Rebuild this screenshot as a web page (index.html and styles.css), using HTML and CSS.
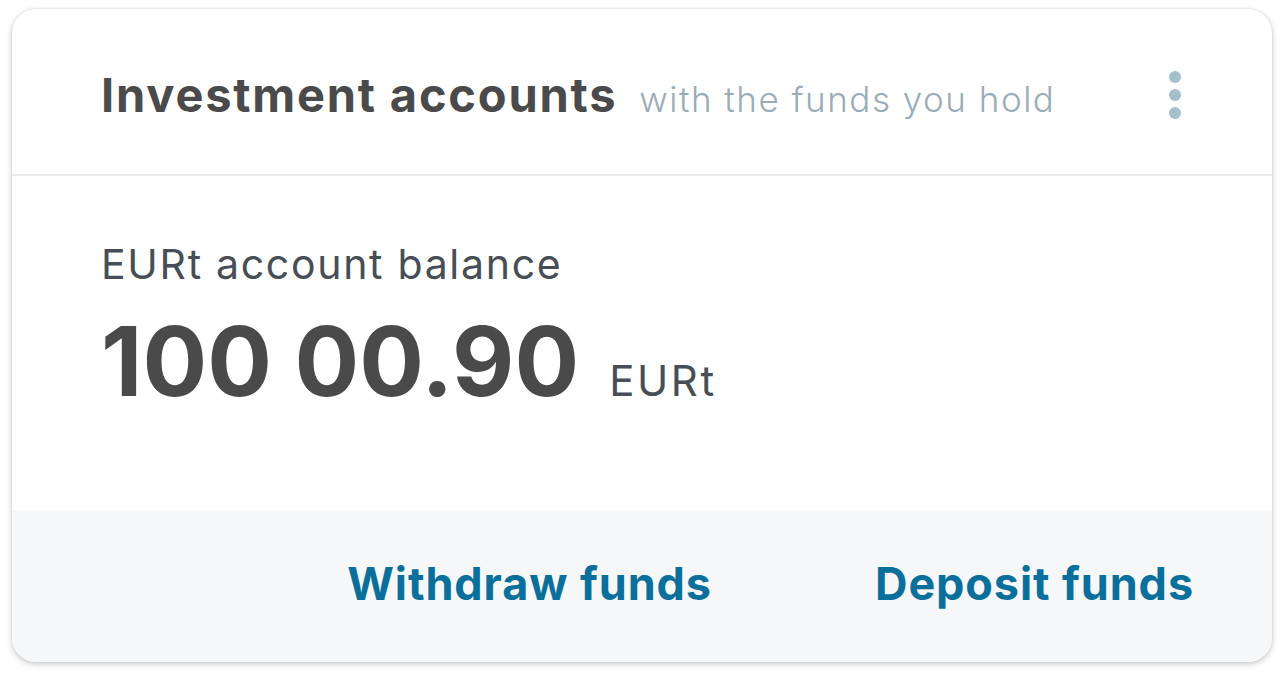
FILE: index.html
```html
<!DOCTYPE html>
<html lang="en">
<head>
<meta charset="utf-8">
<title>Investment accounts</title>
<link rel="stylesheet" href="styles.css">
</head>
<body>
<section class="card">
  <header class="card-header">
    <h2 class="title">Investment accounts <span class="subtitle">with the funds you hold</span></h2>
    <button class="menu" aria-label="More options">
      <svg width="14" height="50" viewBox="0 0 14 50"><circle cx="7" cy="7" r="6" fill="#a4c0cd"/><circle cx="7" cy="25" r="6" fill="#a4c0cd"/><circle cx="7" cy="43" r="6" fill="#a4c0cd"/></svg>
    </button>
  </header>
  <div class="card-body">
    <div class="label">EURt account balance</div>
    <div class="balance"><span class="amount">100 00.90</span><span class="unit">EURt</span></div>
  </div>
  <footer class="card-footer">
    <a class="action" href="#">Withdraw funds</a>
    <a class="action" href="#">Deposit funds</a>
  </footer>
</section>
</body>
</html>
```
FILE: styles.css
```css
html, body {
  margin: 0;
  padding: 0;
  background: #ffffff;
}
body {
  font-family: "Inter", "Open Sans", sans-serif;
  padding: 9px 12px 16px 12px;
}
.card {
  width: 1260px;
  height: 653px;
  box-sizing: border-box;
  border-radius: 24px;
  background: #ffffff;
  box-shadow: 0 2px 6px rgba(0, 0, 0, 0.22), 0 0 2px rgba(0, 0, 0, 0.12);
  overflow: hidden;
  display: flex;
  flex-direction: column;
}
.card-header {
  height: 167px;
  box-sizing: border-box;
  display: flex;
  align-items: center;
  justify-content: space-between;
  padding: 6px 90px 0 89px;
  border-bottom: 2px solid #e9ebed;
}
.title {
  margin: 0;
  font-size: 47px;
  font-weight: 700;
  color: #4a4a4a;
  letter-spacing: 1.8px;
}
.subtitle {
  font-size: 35px;
  font-weight: 300;
  color: #9aacb6;
  margin-left: 9px;
  letter-spacing: 1.5px;
}
.menu {
  border: 0;
  background: none;
  padding: 0;
  display: flex;
}
.card-body {
  flex: 1;
  padding: 63px 89px 0 89px;
}
.label {
  font-size: 41px;
  font-weight: 400;
  color: #474e55;
  letter-spacing: 1.7px;
}
.balance {
  display: flex;
  align-items: baseline;
  margin-top: 14px;
}
.amount {
  font-size: 96px;
  font-weight: 700;
  color: #4a4a4a;
  letter-spacing: 0;
}
.unit {
  font-size: 42px;
  font-weight: 400;
  color: #474e55;
  margin-left: 30px;
  letter-spacing: 2.6px;
}
.card-footer {
  height: 151px;
  box-sizing: border-box;
  background: #f5f7f9;
  display: flex;
  align-items: center;
  justify-content: flex-end;
  gap: 163px;
  padding: 0 78px 6px 0;
}
.action {
  font-size: 45px;
  font-weight: 700;
  color: #0b6f9b;
  text-decoration: none;
  letter-spacing: 0.9px;
}
```
